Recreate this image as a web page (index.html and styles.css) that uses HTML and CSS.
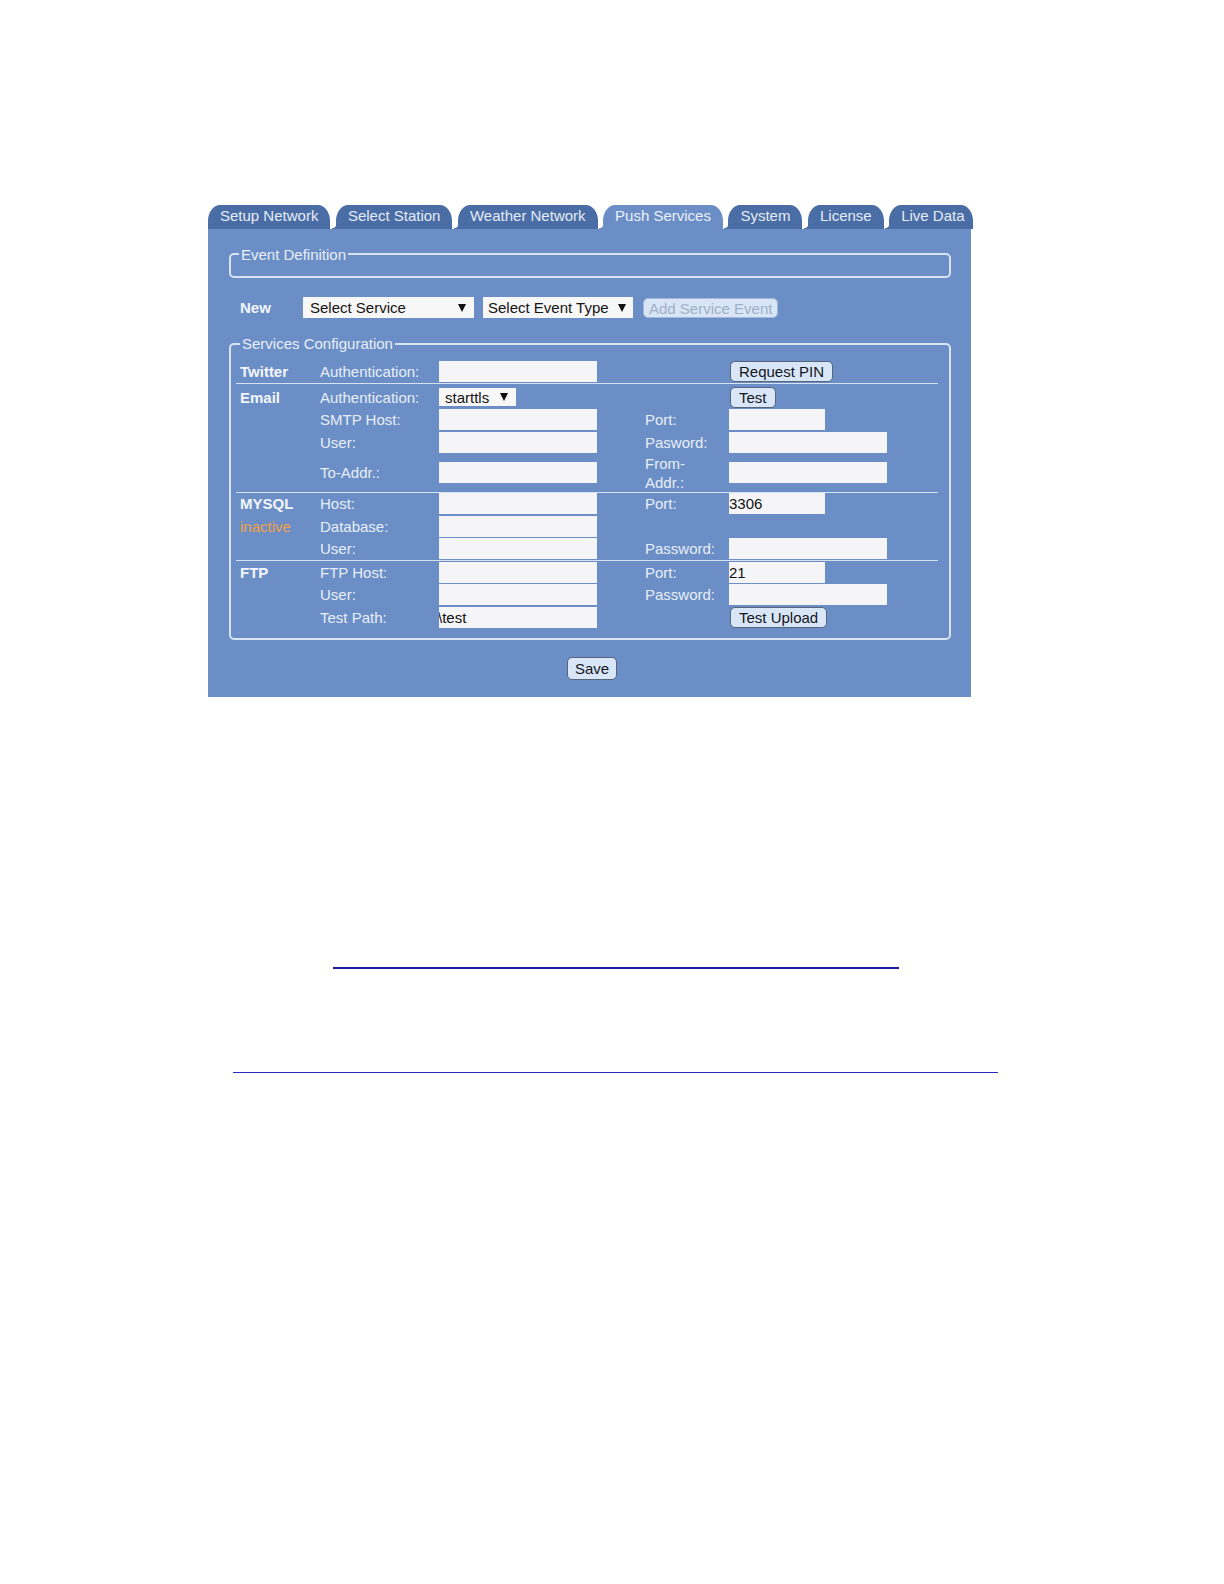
FILE: index.html
```html
<!DOCTYPE html>
<html lang="en">
<head>
<meta charset="utf-8">
<title>Push Services</title>
<link rel="stylesheet" href="styles.css">
</head>
<body>
<div class="page">
  <div class="ui">
    <ul class="tabs">
      <li class="tab">Setup Network</li>
      <li class="tab">Select Station</li>
      <li class="tab">Weather Network</li>
      <li class="tab active">Push Services</li>
      <li class="tab">System</li>
      <li class="tab">License</li>
      <li class="tab last">Live Data</li>
    </ul>
    <div class="panel">
      <fieldset class="box box-event"><legend>Event Definition</legend></fieldset>

      <div class="new-row">
        <span class="name new-name">New</span>
        <div class="select sel-service"><span>Select Service</span><i class="arrow"></i></div>
        <div class="select sel-event"><span>Select Event Type</span><i class="arrow"></i></div>
        <button class="btn btn-add" disabled>Add Service Event</button>
      </div>

      <fieldset class="box box-services"><legend>Services Configuration</legend>
        <div class="grp">
          <div class="row">
            <span class="name">Twitter</span><span class="lbl">Authentication:</span><input class="inp" type="text"><span></span><button class="btn">Request PIN</button>
          </div>
        </div>

        <div class="grp grp-email">
          <div class="row">
            <span class="name">Email</span><span class="lbl">Authentication:</span><div class="select sel-tls"><span>starttls</span><i class="arrow"></i></div><span></span><button class="btn">Test</button>
          </div>
          <div class="row">
            <span></span><span class="lbl">SMTP Host:</span><input class="inp" type="text"><span class="lbl">Port:</span><input class="inp inp-port" type="text">
          </div>
          <div class="row">
            <span></span><span class="lbl">User:</span><input class="inp" type="text"><span class="lbl">Pasword:</span><input class="inp inp-wide" type="password">
          </div>
          <div class="row row-tall">
            <span></span><span class="lbl">To-Addr.:</span><input class="inp" type="text"><span class="lbl lbl-two">From-<br>Addr.:</span><input class="inp inp-wide" type="text">
          </div>
        </div>

        <div class="grp">
          <div class="row">
            <span class="name">MYSQL</span><span class="lbl">Host:</span><input class="inp" type="text"><span class="lbl">Port:</span><input class="inp inp-port" type="text" value="3306">
          </div>
          <div class="row">
            <span class="state">inactive</span><span class="lbl">Database:</span><input class="inp" type="text"><span></span><span></span>
          </div>
          <div class="row">
            <span></span><span class="lbl">User:</span><input class="inp" type="text"><span class="lbl">Password:</span><input class="inp inp-wide" type="password">
          </div>
        </div>

        <div class="grp">
          <div class="row">
            <span class="name">FTP</span><span class="lbl">FTP Host:</span><input class="inp" type="text"><span class="lbl">Port:</span><input class="inp inp-port" type="text" value="21">
          </div>
          <div class="row">
            <span></span><span class="lbl">User:</span><input class="inp" type="text"><span class="lbl">Password:</span><input class="inp inp-wide" type="password">
          </div>
          <div class="row">
            <span></span><span class="lbl">Test Path:</span><input class="inp inp-cut" type="text" value="\test"><span></span><button class="btn">Test Upload</button>
          </div>
        </div>
      </fieldset>

      <div class="save-row"><button class="btn btn-save">Save</button></div>
    </div>
  </div>

  <div class="rule rule-one"></div>
  <div class="rule rule-two"></div>
</div>
</body>
</html>
```

FILE: styles.css
```css
* {
  box-sizing: border-box;
}

html,
body {
  margin: 0;
  padding: 0;
  background: #ffffff;
}

body {
  font-family: "Liberation Sans", Arial, sans-serif;
  font-size: 15px;
  color: #e8eef9;
}

.page {
  padding: 205px 0 0 208px;
  min-height: 1584px;
}

.ui {
  width: 763px;
}

/* ---------- tabs ---------- */
.tabs {
  display: flex;
  gap: 5.5px;
  list-style: none;
  margin: 0;
  padding: 0;
  height: 23.5px;
  white-space: nowrap;
}

.tab {
  --tab: #4a6da5;
  position: relative;
  height: 23.5px;
  line-height: 22px;
  padding: 0 12px;
  background: var(--tab);
  color: #e4ecf7;
  border-radius: 12px 12px 0 0 / 16px 16px 0 0;
}

.tab::before {
  content: "";
  position: absolute;
  left: -4px;
  bottom: 0;
  width: 4px;
  height: 5px;
  background: radial-gradient(circle at 0 0, rgba(0, 0, 0, 0) 4px, var(--tab) 4.6px);
}

.tab:first-child::before {
  display: none;
}

.tab.active {
  --tab: #6a8ec5;
  color: #ecf1fa;
}

.tab.last {
  padding-right: 8px;
}

/* ---------- panel ---------- */
.panel {
  background: #6a8ec5;
  padding: 17px 20px 17px 21px;
}

.box {
  margin: 0;
  min-width: 0;
  border: 2px solid #d9e4f3;
  border-radius: 5px;
}

.box legend {
  padding: 0 2px;
  line-height: 17px;
  color: #e8eef9;
}

.box-event {
  padding: 0 8px 13.5px;
}

.box-services {
  margin-top: 17px;
  padding: 8.5px 11px 9.5px 9px;
}

.name {
  font-weight: bold;
  color: #f3f6fc;
}

.state {
  color: #f2a148;
}

/* ---------- new service row ---------- */
.new-row {
  display: flex;
  align-items: center;
  height: 21px;
  margin-top: 19px;
  padding-left: 11px;
}

.new-name {
  width: 63px;
}

.select {
  display: flex;
  align-items: center;
  justify-content: space-between;
  height: 21px;
  background: #f7f7f8;
  color: #141414;
  white-space: nowrap;
}

.arrow {
  display: block;
  width: 0;
  height: 0;
  border-left: 4px solid transparent;
  border-right: 4px solid transparent;
  border-top: 8px solid #111111;
}

.sel-service {
  width: 171px;
  padding: 0 8px 0 7px;
}

.sel-event {
  width: 150px;
  margin-left: 9px;
  padding: 0 7px 0 5px;
}

.sel-tls {
  width: 77px;
  height: 18px;
  padding: 0 8px 0 6px;
}

/* ---------- buttons ---------- */
.btn {
  font-family: inherit;
  font-size: 15px;
  color: #14161c;
  background: #d9e6f8;
  border: 1px solid #56657b;
  border-radius: 5px;
  height: 21px;
  padding: 0 8px;
  line-height: 19px;
  white-space: nowrap;
}

.row .btn {
  margin-left: 1px;
}

.btn-add {
  margin-left: 10px;
  height: 20px;
  padding: 0 5px;
  color: #9fb1ca;
  background: #d8e5f6;
  border-color: #a3b8d6;
}

.btn-save {
  height: 23px;
  padding: 0 7px;
}

.save-row {
  display: flex;
  justify-content: center;
  margin-top: 17px;
  padding-left: 4px;
}

/* ---------- services grid ---------- */
.grp + .grp {
  border-top: 1px solid #d6e1f1;
}

.grp {
  margin-left: -4px;
  padding-left: 4px;
}

.grp-email {
  padding-top: 2px;
}

.row {
  display: grid;
  grid-template-columns: 80px 119px 206px 84px 1fr;
  align-items: center;
  justify-items: start;
  height: 22.5px;
}

.row-tall {
  height: 38px;
}

.lbl {
  white-space: nowrap;
  color: #e8eef9;
}

.lbl-two {
  white-space: normal;
  line-height: 19px;
}

.inp {
  width: 158px;
  height: 21px;
  border: 0;
  margin: 0;
  padding: 0 1px;
  background: #f5f5f7;
  font-family: inherit;
  font-size: 15px;
  color: #111111;
  outline: none;
}

.inp-port {
  width: 96px;
  padding: 0;
}

.inp-wide {
  width: 158px;
}

.inp-cut {
  padding: 0;
  text-indent: -1px;
}

/* ---------- link rules below ---------- */
.rule {
  height: 0;
}

.rule-one {
  margin-top: 270px;
  margin-left: 125px;
  width: 566px;
  border-top: 2px solid #1b1ba3;
}

.rule-two {
  margin-top: 103px;
  margin-left: 25px;
  width: 765px;
  border-top: 1px solid #2a2ac0;
}
```
